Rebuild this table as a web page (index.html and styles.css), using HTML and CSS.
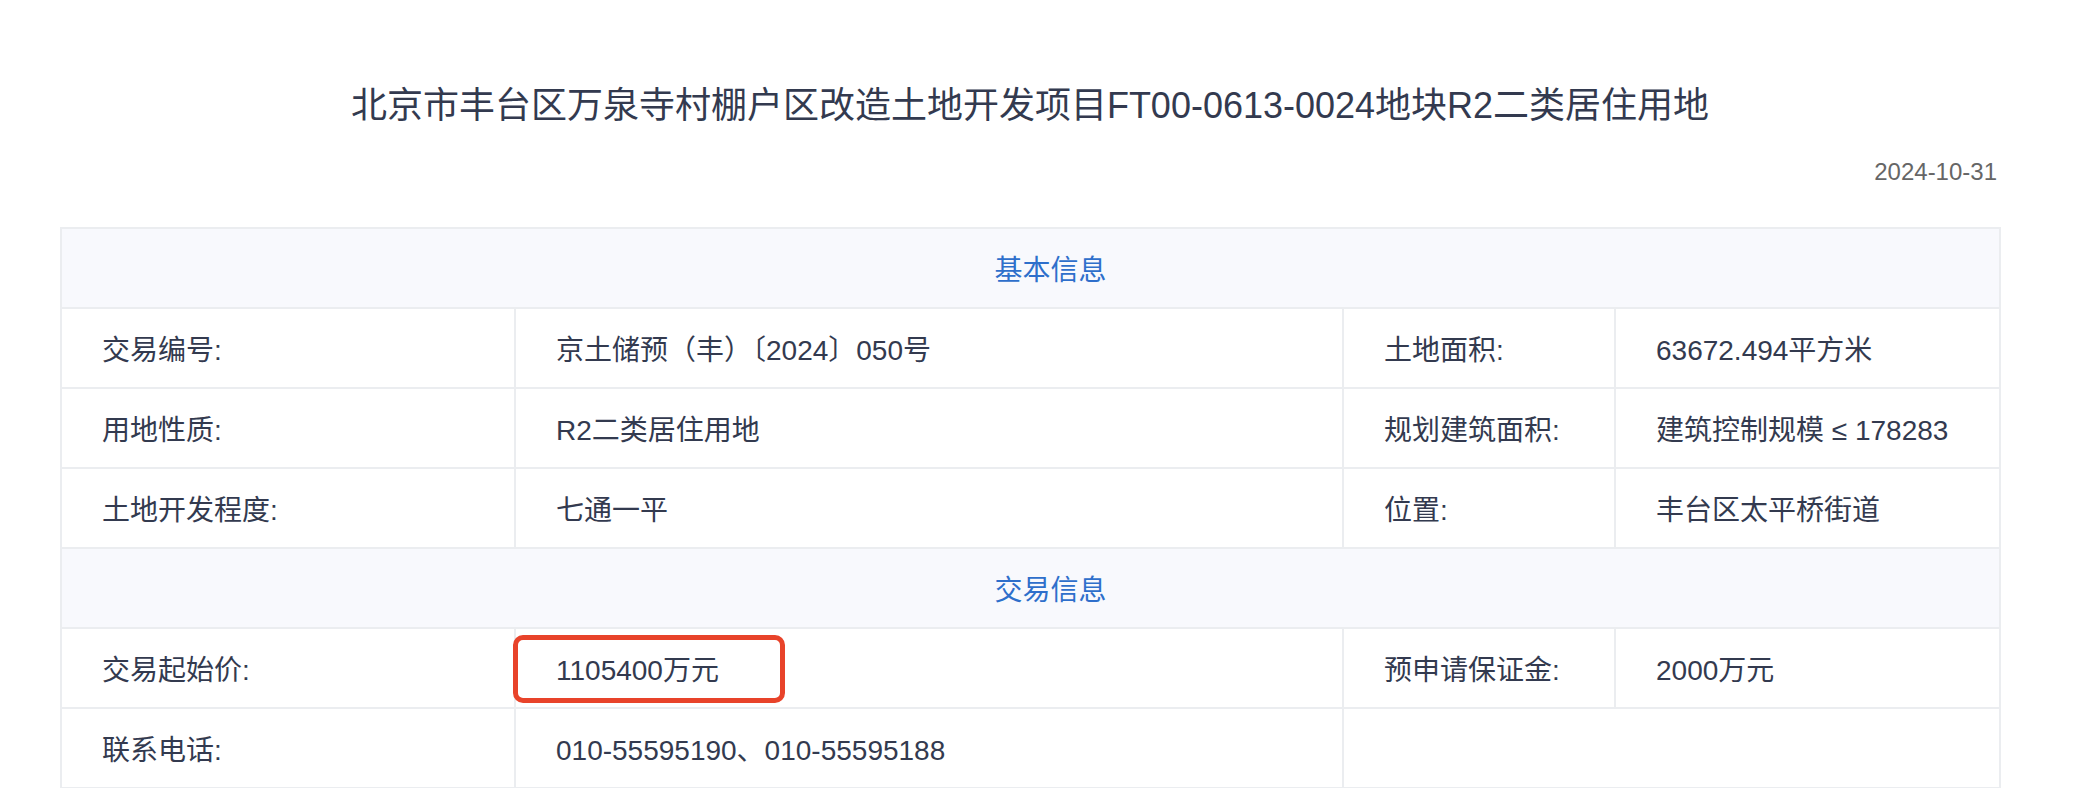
FILE: index.html
```html
<!DOCTYPE html>
<html lang="zh-CN">
<head>
<meta charset="utf-8">
<title>北京市丰台区万泉寺村棚户区改造土地开发项目</title>
<link rel="stylesheet" href="styles.css">
</head>
<body>
<div class="page">
  <h1 class="title">北京市丰台区万泉寺村棚户区改造土地开发项目FT00-0613-0024地块R2二类居住用地</h1>
  <div class="date">2024-10-31</div>
  <table class="info">
    <colgroup>
      <col class="c1"><col class="c2"><col class="c3"><col class="c4">
    </colgroup>
    <tr class="section"><td colspan="4">基本信息</td></tr>
    <tr>
      <td>交易编号:</td>
      <td>京土储预（丰）〔2024〕050号</td>
      <td>土地面积:</td>
      <td>63672.494平方米</td>
    </tr>
    <tr>
      <td>用地性质:</td>
      <td>R2二类居住用地</td>
      <td>规划建筑面积:</td>
      <td>建筑控制规模 ≤ 178283</td>
    </tr>
    <tr>
      <td>土地开发程度:</td>
      <td>七通一平</td>
      <td>位置:</td>
      <td>丰台区太平桥街道</td>
    </tr>
    <tr class="section"><td colspan="4">交易信息</td></tr>
    <tr>
      <td>交易起始价:</td>
      <td class="marked">1105400万元<span class="mark-box"></span></td>
      <td>预申请保证金:</td>
      <td>2000万元</td>
    </tr>
    <tr>
      <td>联系电话:</td>
      <td>010-55595190、010-55595188</td>
      <td colspan="2"></td>
    </tr>
  </table>
</div>
</body>
</html>
```

FILE: styles.css
```css
html, body {
  margin: 0;
  padding: 0;
  background: #ffffff;
}

body {
  font-family: "Liberation Sans", "Noto Sans CJK SC", sans-serif;
  color: #333a4f;
}

.page {
  width: 2078px;
  padding: 0 78px 0 60px;
  box-sizing: border-box;
}

.title {
  margin: 0;
  padding-top: 82px;
  height: 48px;
  line-height: 48px;
  font-size: 36px;
  font-weight: normal;
  text-align: center;
  color: #333a4f;
}

.date {
  margin-top: 26px;
  height: 32px;
  line-height: 32px;
  font-size: 24px;
  color: #666666;
  text-align: right;
  padding-right: 3px;
}

.info {
  margin-top: 39px;
  width: 1939px;
  border-collapse: collapse;
  table-layout: fixed;
  font-size: 28px;
}

.c1 { width: 454px; }
.c2 { width: 828px; }
.c3 { width: 272px; }
.c4 { width: 385px; }

.info td {
  height: 78px;
  padding: 0 0 0 40px;
  border: 2px solid #ebedf0;
  vertical-align: middle;
  color: #333a4f;
}

.info tr.section td {
  background: #f8f9fd;
  color: #2e6fcb;
  text-align: center;
  padding: 0 0 0 40px;
}

.info td.marked {
  position: relative;
}

.mark-box {
  position: absolute;
  left: -3px;
  top: 6px;
  width: 272px;
  height: 68px;
  box-sizing: border-box;
  border: 5px solid #e8432a;
  border-radius: 10px;
}
```
